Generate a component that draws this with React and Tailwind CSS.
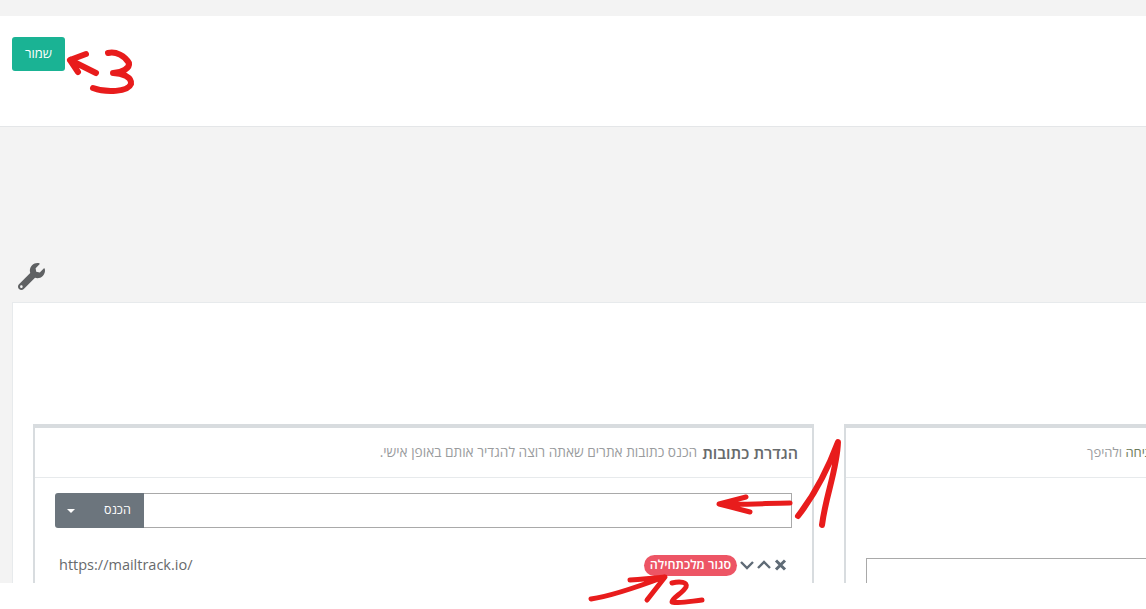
import { FaWrench } from "react-icons/fa"

const font = { fontFamily: '"Open Sans", "Noto Sans", sans-serif' }

function Scribbles() {
  return (
    <svg className="absolute left-0 top-0 pointer-events-none" width="1146" height="609" fill="none" stroke="#e81c1c" strokeLinecap="round" strokeLinejoin="round">
      {/* 3 */}
      <path strokeWidth="6" d="M96 73 L70 60 L86 54 M70 60 L78 72" />
      <path strokeWidth="6" d="M108 53 C116 51 125 56 129 63 C130 68 122 73 113 73 C122 73 132 77 131 84 C128 92 106 93 93 88" />
      {/* 1 */}
      <path strokeWidth="6" d="M798 516 C812 498 826 474 838 442 C837 470 826 494 822 525" />
      <path strokeWidth="5" d="M790 503 C770 503 745 505 719 504 L746 497 M719 504 L750 512" />
      {/* 2 */}
      <path strokeWidth="5" d="M591 599 C612 596 640 586 664 577 M630 580 C645 579 655 578 665 577 L647 600" />
      <path strokeWidth="5" d="M672 583 C680 581 688 582 686 587 C683 593 672 598 672 602 C680 604 692 601 702 600" />
    </svg>
  )
}

export default function App() {
  return (
    <div className="relative w-[1146px] h-[609px] overflow-hidden bg-white" style={font}>
      <div className="h-[583px] overflow-hidden bg-[#f3f3f3] pt-4">
        <div className="h-[111px] bg-white border-b border-[#e4e6e8] pl-3 pt-[21px]">
          <button className="w-[53px] h-[34px] rounded-[3px] bg-[#1ab394] text-[13px] text-white">שמור</button>
        </div>
        <div className="h-[175px] pl-[18px] pt-[136px]">
          <FaWrench className="w-[27px] h-[27px] text-[#5f6163]" />
        </div>
        <div className="h-[281px] ml-3 bg-white border-l border-t border-[#e7eaec] pt-[121px] pl-5 flex gap-[30px]">
          <div className="w-[781px] shrink-0 h-[200px] border-x-2 border-t-[4px] border-[#d8dcdf]">
            <div className="h-[50px] border-b border-[#e7eaec] flex items-center justify-start gap-[5px] px-[14px] text-[13.7px]" dir="rtl">
              <span className="text-[16px] font-semibold text-[#676a6c]">הגדרת כתובות</span>
              <span className="text-[#9a9c9e]">הכנס כתובות אתרים שאתה רוצה להגדיר אותם באופן אישי.</span>
            </div>
            <div className="pl-5 pr-5 pt-[15px]">
              <div className="flex h-[35px]">
                <button className="w-[89px] rounded-l-[3px] bg-[#6c757d] text-white text-[12.5px] flex items-center pl-3 gap-[29px]">
                  <span className="w-0 h-0 border-x-[4px] border-x-transparent border-t-[4px] border-t-white" />
                  <span>הכנס</span>
                </button>
                <div className="flex-1 border border-[#a9a9a9] border-l-0 bg-white" />
              </div>
              <div className="flex items-center justify-between pl-1 pr-[5px] pt-[26px] h-[48px]">
                <span className="text-[14.5px] text-[#676a6c]">https://mailtrack.io/</span>
                <div className="flex items-center gap-[3px]">
                  <span className="h-[21px] px-[6px] rounded-full bg-[#ed5565] text-white text-[12.5px] font-semibold flex items-center whitespace-nowrap">סגור מלכתחילה</span>
                  <svg width="14" height="10" viewBox="0 0 14 10" fill="none" stroke="#5f6b76" strokeWidth="2.4"><path d="M1 2l6 6 6-6" /></svg>
                  <svg width="14" height="10" viewBox="0 0 14 10" fill="none" stroke="#5f6b76" strokeWidth="2.4"><path d="M1 8l6-6 6 6" /></svg>
                  <svg width="13" height="12" viewBox="0 0 13 12" fill="none" stroke="#5f6b76" strokeWidth="3"><path d="M2 1.5l9 9M11 1.5l-9 9" /></svg>
                </div>
              </div>
            </div>
          </div>
          <div className="w-[400px] shrink-0 h-[200px] border-l-2 border-t-[4px] border-[#d8dcdf]">
            <div className="h-[50px] border-b border-[#e7eaec] flex items-center justify-end pl-[241px] text-[13px] text-[#9a9c9e] whitespace-nowrap" dir="rtl">
              <span><span className="text-[#6b7a5a]">פתיחה</span> ולהיפך</span>
            </div>
            <div className="ml-5 mt-[80px] h-[80px] border border-[#a9a9a9] border-r-0" />
          </div>
        </div>
      </div>
      <Scribbles />
    </div>
  )
}
